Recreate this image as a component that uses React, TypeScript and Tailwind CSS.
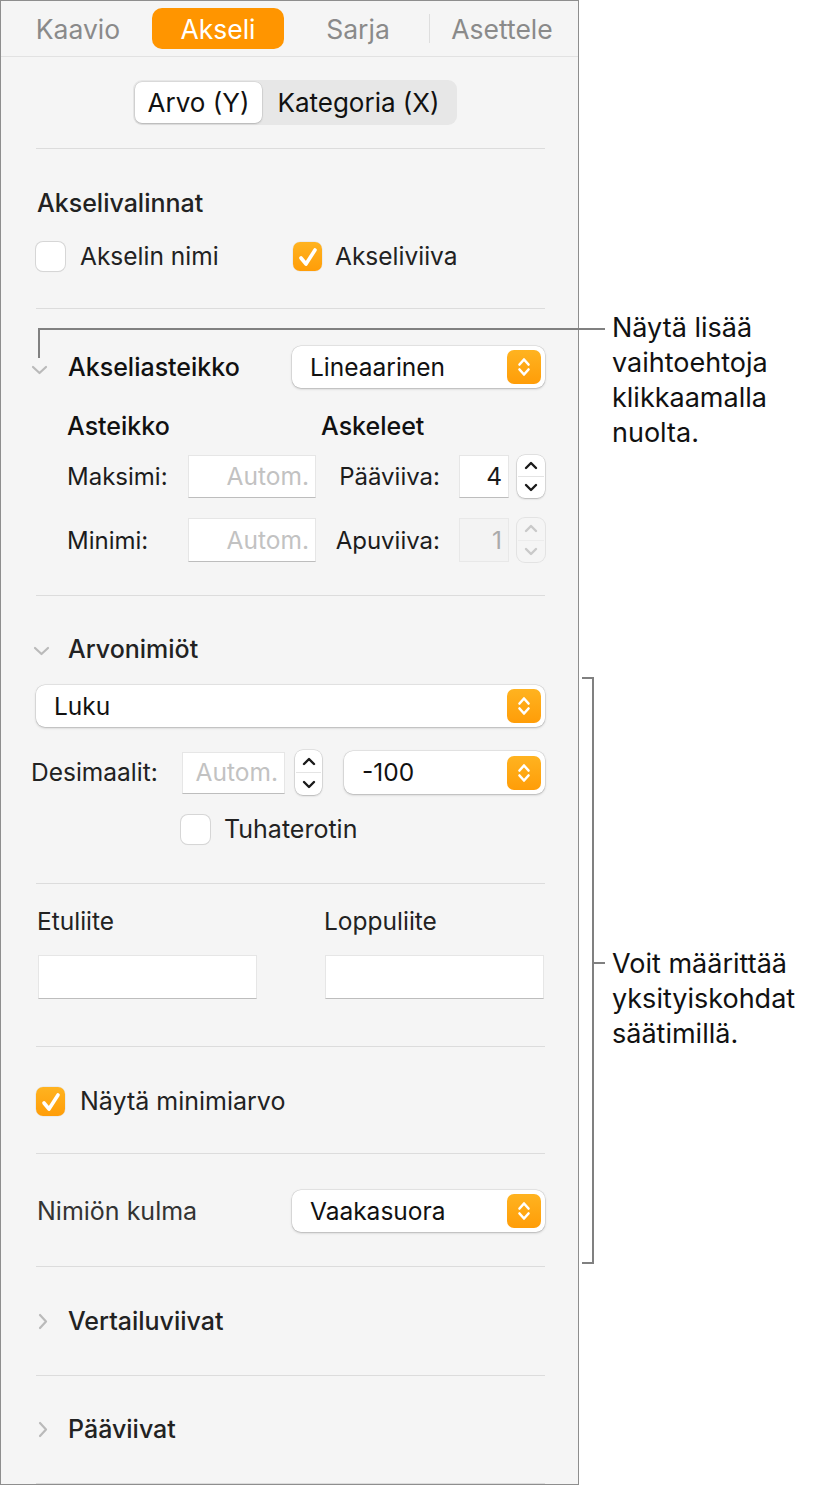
import React from "react";

function OrangeUpDown() {
  return (
    <div className="w-[34px] h-[34px] rounded-[7px] bg-[linear-gradient(180deg,#ffb320,#ff9d08)] flex items-center justify-center shrink-0">
      <svg width="16" height="24" viewBox="0 0 16 24" fill="none" stroke="white" strokeWidth="2.6" strokeLinecap="round" strokeLinejoin="round">
        <path d="M3.5 9.5 L8 4.5 L12.5 9.5" />
        <path d="M3.5 14.5 L8 19.5 L12.5 14.5" />
      </svg>
    </div>
  );
}

function Popup({ label, className }: { label: string; className: string }) {
  return (
    <div
      className={
        "flex items-center justify-between bg-white rounded-[9px] shadow-[0_0_0_0.5px_rgba(0,0,0,0.12),0_1px_2.5px_rgba(0,0,0,0.22)] pl-[18px] pr-[4px] shrink-0 " +
        className
      }
    >
      <span className="text-[24.5px] leading-[29px] text-[#111111]">{label}</span>
      <OrangeUpDown />
    </div>
  );
}

function Stepper({ disabled, className }: { disabled?: boolean; className: string }) {
  const stroke = disabled ? "#c9c9c9" : "#1a1a1a";
  return (
    <div
      className={
        "rounded-[8px] flex flex-col shrink-0 " +
        (disabled
          ? "bg-[#f5f5f5] shadow-[0_0_0_1px_#e3e3e3] "
          : "bg-white shadow-[0_0_0_0.5px_rgba(0,0,0,0.15),0_1px_2px_rgba(0,0,0,0.2)] ") +
        className
      }
    >
      <div className="flex-1 flex items-center justify-center">
        <svg width="14" height="9" viewBox="0 0 14 9" fill="none" stroke={stroke} strokeWidth="2.4" strokeLinecap="round" strokeLinejoin="round">
          <path d="M2 7 L7 2 L12 7" />
        </svg>
      </div>
      <div className={"h-px mx-[1px] " + (disabled ? "bg-[#ececec]" : "bg-[#e4e4e4]")} />
      <div className="flex-1 flex items-center justify-center">
        <svg width="14" height="9" viewBox="0 0 14 9" fill="none" stroke={stroke} strokeWidth="2.4" strokeLinecap="round" strokeLinejoin="round">
          <path d="M2 2 L7 7 L12 2" />
        </svg>
      </div>
    </div>
  );
}

function Checkbox({ checked }: { checked?: boolean }) {
  if (checked) {
    return (
      <div className="w-[29px] h-[29px] rounded-[7px] bg-[linear-gradient(180deg,#ffb320,#ff9d08)] shadow-[0_0_0_0.5px_rgba(0,0,0,0.08)] flex items-center justify-center shrink-0">
        <svg width="22" height="22" viewBox="0 0 22 22" fill="none" stroke="white" strokeWidth="3.6" strokeLinecap="round" strokeLinejoin="round">
          <path d="M4 12 L9 18 L18 4" />
        </svg>
      </div>
    );
  }
  return (
    <div className="w-[29px] h-[29px] rounded-[7px] bg-white shadow-[0_0_0_1px_#d6d6d6,0_1px_1px_rgba(0,0,0,0.08)] shrink-0" />
  );
}

function ChevronDown({ className }: { className: string }) {
  return (
    <svg className={"shrink-0 " + className} width="17" height="10" viewBox="0 0 17 10" fill="none" stroke="#bababa" strokeWidth="2.2" strokeLinecap="round" strokeLinejoin="round">
      <path d="M2 2 L8.5 8 L15 2" />
    </svg>
  );
}

function ChevronRight({ className }: { className: string }) {
  return (
    <svg className={"shrink-0 " + className} width="10" height="17" viewBox="0 0 10 17" fill="none" stroke="#bababa" strokeWidth="2.2" strokeLinecap="round" strokeLinejoin="round">
      <path d="M2 2 L8 8.5 L2 15" />
    </svg>
  );
}

function Field({ text, className, tone }: { text?: string; className: string; tone?: "placeholder" | "value" | "disabled" }) {
  const color = tone === "value" ? "text-[#1a1a1a]" : tone === "disabled" ? "text-[#aaaaaa]" : "text-[#c2c2c2]";
  const bg =
    tone === "disabled"
      ? "bg-[#f3f3f3] border border-[#e8e8e8]"
      : "bg-white border border-[#e6e6e6] border-b-[#bdbdbd]";
  return (
    <div className={"flex items-center justify-end pr-[6px] shrink-0 " + bg + " " + className}>
      {text ? <span className={"text-[24.5px] leading-[29px] " + color}>{text}</span> : null}
    </div>
  );
}

function Sep() {
  return <div className="ml-[35px] mr-[33px] h-px bg-[#dcdcdc]" />;
}

export default function App() {
  return (
    <div className="relative w-[817px] h-[1485px] bg-white flex font-[Inter,'Liberation_Sans',sans-serif] text-[#1c1c1c] overflow-hidden">
      {/* Panel */}
      <div className="w-[579px] h-[1485px] shrink-0 bg-[#f5f5f5] border border-[#8e8e8e] flex flex-col">
        {/* Tabs */}
        <div className="h-[55px] flex items-center pl-[19px]">
          <div className="w-[116px] text-center text-[26.5px] leading-[30px] text-[#8a8a8a]">Kaavio</div>
          <div className="ml-[16px] w-[132px] h-[41px] rounded-[10px] bg-[#ff9500] flex items-center justify-center text-[26.5px] leading-[30px] text-white">
            Akseli
          </div>
          <div className="ml-[8px] w-[132px] text-center text-[26.5px] leading-[30px] text-[#8a8a8a]">Sarja</div>
          <div className="ml-[5px] w-px h-[29px] bg-[#dedede]" />
          <div className="w-[144px] text-center text-[26.5px] leading-[30px] text-[#8a8a8a]">Asettele</div>
        </div>
        <div className="h-px bg-[#e2e2e2]" />

        {/* Segmented control */}
        <div className="h-[91px] pl-[35px] pr-[33px] pt-[23px]">
          <div className="ml-[97px] w-[324px] h-[45px] rounded-[9px] bg-[#e7e7e7] p-[2px] flex">
            <div className="w-[127px] h-full rounded-[7px] bg-white shadow-[0_0_0_0.5px_rgba(0,0,0,0.1),0_1px_2px_rgba(0,0,0,0.18)] flex items-center justify-center text-[26px] leading-[29px] text-[#111111]">
              Arvo (Y)
            </div>
            <div className="flex-1 flex items-center justify-center text-[26px] leading-[29px] text-[#111111]">
              Kategoria (X)
            </div>
          </div>
        </div>
        <Sep />

        {/* Akselivalinnat */}
        <div className="h-[159px] pl-[35px] pr-[33px] pt-[40px]">
          <div className="pl-[1px] text-[25px] leading-[29px] font-medium text-[#222222]">Akselivalinnat</div>
          <div className="mt-[24px] h-[29px] flex items-center">
            <div className="w-[257px] flex items-center">
              <Checkbox />
              <span className="ml-[15px] text-[24.5px] leading-[29px] text-[#222222]">Akselin nimi</span>
            </div>
            <Checkbox checked />
            <span className="ml-[13px] text-[24.5px] leading-[29px] text-[#222222]">Akseliviiva</span>
          </div>
        </div>
        <Sep />

        {/* Akseliasteikko */}
        <div className="h-[286px] pl-[35px] pr-[33px] pt-[37px]">
          <div className="h-[42px] flex items-center">
            <ChevronDown className="-ml-[5px] mt-[6px]" />
            <span className="ml-[20px] text-[25px] leading-[29px] font-medium text-[#111111]">Akseliasteikko</span>
            <Popup label="Lineaarinen" className="ml-auto w-[253px] h-[42px]" />
          </div>
          <div className="mt-[24px] h-[29px] flex items-center pl-[31px] text-[25px] leading-[29px] font-medium text-[#111111]">
            <div className="w-[249px]">Asteikko</div>
            <div className="pl-[5px]">Askeleet</div>
          </div>
          <div className="mt-[14px] h-[43px] flex items-center pl-[31px]">
            <div className="w-[121px] text-[24px] leading-[29px] text-[#1c1c1c]">Maksimi:</div>
            <Field text="Autom." className="w-[128px] h-[43px]" />
            <div className="w-[143px] text-right pr-[19px] text-[24px] leading-[29px] text-[#1c1c1c]">Pääviiva:</div>
            <Field text="4" tone="value" className="w-[50px] h-[43px]" />
            <Stepper className="ml-[8px] w-[28px] h-[43px]" />
          </div>
          <div className="mt-[20px] h-[44px] flex items-center pl-[31px]">
            <div className="w-[121px] text-[24px] leading-[29px] text-[#1c1c1c]">Minimi:</div>
            <Field text="Autom." className="w-[128px] h-[44px]" />
            <div className="w-[143px] text-right pr-[19px] text-[24px] leading-[29px] text-[#1c1c1c]">Apuviiva:</div>
            <Field text="1" tone="disabled" className="w-[50px] h-[44px]" />
            <Stepper disabled className="ml-[8px] w-[28px] h-[44px]" />
          </div>
        </div>
        <Sep />

        {/* Arvonimiöt */}
        <div className="h-[287px] pl-[35px] pr-[33px] pt-[39px]">
          <div className="h-[29px] flex items-center">
            <ChevronDown className="-ml-[3px] mt-[3px]" />
            <span className="ml-[18px] text-[25px] leading-[29px] font-medium text-[#222222]">Arvonimiöt</span>
          </div>
          <Popup label="Luku" className="mt-[21px] w-full h-[42px]" />
          <div className="mt-[23px] h-[45px] flex items-center -ml-[5px]">
            <div className="w-[151px] text-[24.5px] leading-[29px] text-[#222222]">Desimaalit:</div>
            <Field text="Autom." className="w-[103px] h-[42px]" />
            <Stepper className="ml-[10px] w-[27px] h-[45px]" />
            <Popup label="-100" className="ml-[22px] w-[201px] h-[43px]" />
          </div>
          <div className="mt-[20px] h-[29px] flex items-center pl-[145px]">
            <Checkbox />
            <span className="ml-[14px] text-[25px] leading-[29px] text-[#222222]">Tuhaterotin</span>
          </div>
        </div>
        <Sep />

        {/* Etuliite / Loppuliite */}
        <div className="h-[162px] pl-[35px] pr-[33px] pt-[23px]">
          <div className="h-[29px] flex items-center pl-[1px] text-[24.5px] leading-[29px] text-[#222222]">
            <div className="w-[287px]">Etuliite</div>
            <div>Loppuliite</div>
          </div>
          <div className="mt-[19px] h-[44px] flex">
            <Field className="ml-[2px] w-[219px] h-[44px]" />
            <Field className="ml-[68px] w-[219px] h-[44px]" />
          </div>
        </div>
        <Sep />

        {/* Näytä minimiarvo */}
        <div className="h-[106px] pl-[35px] pr-[33px] pt-[40px]">
          <div className="h-[29px] flex items-center">
            <Checkbox checked />
            <span className="ml-[15px] text-[25px] leading-[29px] text-[#222222]">Näytä minimiarvo</span>
          </div>
        </div>
        <Sep />

        {/* Nimiön kulma */}
        <div className="h-[112px] pl-[35px] pr-[33px] pt-[36px]">
          <div className="h-[42px] flex items-center justify-between">
            <span className="pl-[1px] text-[25px] leading-[29px] text-[#333333]">Nimiön kulma</span>
            <Popup label="Vaakasuora" className="w-[253px] h-[42px]" />
          </div>
        </div>
        <Sep />

        {/* Vertailuviivat */}
        <div className="h-[108px] pl-[35px] pr-[33px] pt-[40px]">
          <div className="h-[29px] flex items-center">
            <ChevronRight className="ml-[2px]" />
            <span className="ml-[20px] text-[25px] leading-[29px] font-medium text-[#222222]">Vertailuviivat</span>
          </div>
        </div>
        <Sep />

        {/* Pääviivat */}
        <div className="h-[107px] pl-[35px] pr-[33px] pt-[39px]">
          <div className="h-[29px] flex items-center">
            <ChevronRight className="ml-[2px]" />
            <span className="ml-[20px] text-[25px] leading-[29px] font-medium text-[#222222]">Pääviivat</span>
          </div>
        </div>
        <Sep />
      </div>

      {/* Callout texts */}
      <div className="flex-1 pl-[33px] text-[27px] leading-[35px] text-[#111111]">
        <div className="mt-[310px]">
          Näytä lisää
          <br />
          vaihtoehtoja
          <br />
          klikkaamalla
          <br />
          nuolta.
        </div>
        <div className="mt-[496px]">
          Voit määrittää
          <br />
          yksityiskohdat
          <br />
          säätimillä.
        </div>
      </div>

      {/* Callout lines */}
      <div className="absolute left-[38px] top-[328px] w-[567px] h-[2px] bg-[#808080]" />
      <div className="absolute left-[38px] top-[328px] w-[2px] h-[30px] bg-[#808080]" />
      <div className="absolute left-[582px] top-[677px] w-[12px] h-[2px] bg-[#808080]" />
      <div className="absolute left-[592px] top-[677px] w-[2px] h-[587px] bg-[#808080]" />
      <div className="absolute left-[582px] top-[1262px] w-[12px] h-[2px] bg-[#808080]" />
      <div className="absolute left-[594px] top-[962px] w-[11px] h-[2px] bg-[#808080]" />
    </div>
  );
}
